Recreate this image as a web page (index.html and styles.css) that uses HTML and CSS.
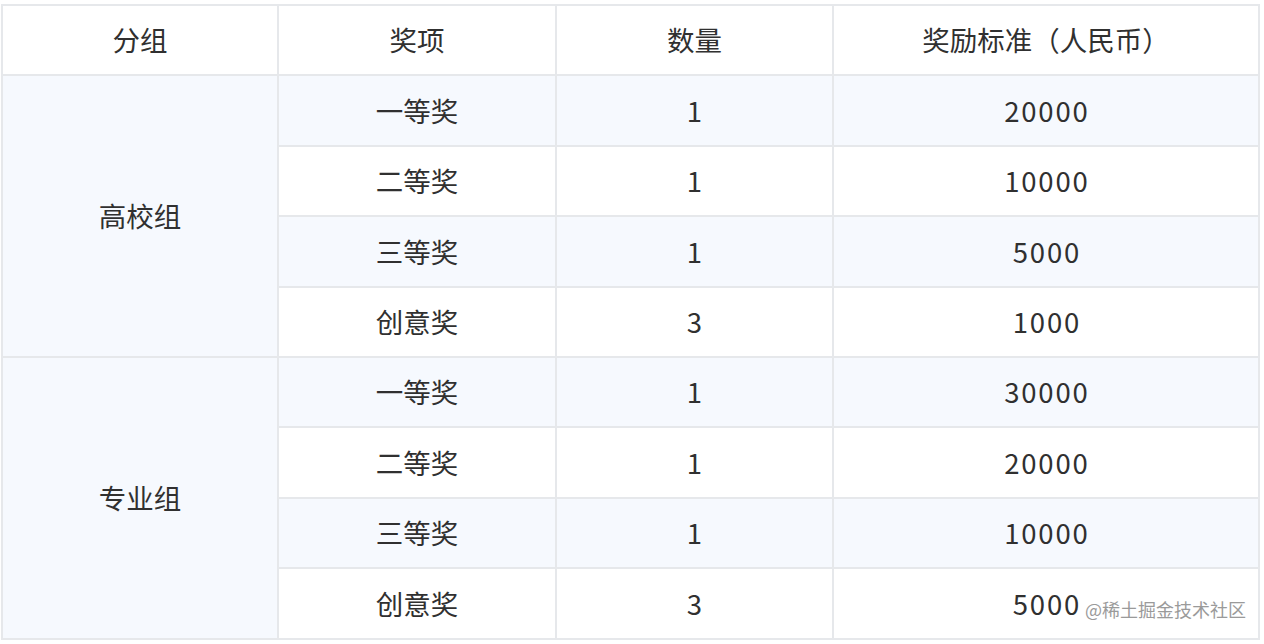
FILE: index.html
```html
<!DOCTYPE html>
<html lang="zh">
<head>
<meta charset="utf-8">
<link rel="stylesheet" href="styles.css">
</head>
<body>
<div class="wrap">
<table class="prize">
<colgroup><col class="c1"><col class="c2"><col class="c3"><col class="c4"></colgroup>
<thead>
<tr><th>分组</th><th>奖项</th><th>数量</th><th>奖励标准（人民币）</th></tr>
</thead>
<tbody>
<tr class="alt"><td rowspan="4">高校组</td><td>一等奖</td><td class="num">1</td><td class="num">20000</td></tr>
<tr><td>二等奖</td><td class="num">1</td><td class="num">10000</td></tr>
<tr class="alt"><td>三等奖</td><td class="num">1</td><td class="num">5000</td></tr>
<tr><td>创意奖</td><td class="num">3</td><td class="num">1000</td></tr>
<tr class="alt"><td rowspan="4">专业组</td><td>一等奖</td><td class="num">1</td><td class="num">30000</td></tr>
<tr><td>二等奖</td><td class="num">1</td><td class="num">20000</td></tr>
<tr class="alt"><td>三等奖</td><td class="num">1</td><td class="num">10000</td></tr>
<tr><td>创意奖</td><td class="num">3</td><td class="num">5000</td></tr>
</tbody>
</table>
<span class="mark">@稀土掘金技术社区</span>
</div>
</body>
</html>
```
FILE: styles.css
```css
html, body { margin: 0; padding: 0; background: #fff; }
body { font-family: "Noto Sans CJK SC", "Noto Sans", sans-serif; color: #303030; }
.wrap { position: relative; padding: 4px 6px 0 1px; }
.prize { border-collapse: collapse; width: 1257px; table-layout: fixed; font-size: 27.5px; }
.c1 { width: 276px; } .c2 { width: 278px; } .c3 { width: 277px; } .c4 { width: 426px; }
.prize th, .prize td { border: 2px solid #e6e8eb; text-align: center; vertical-align: middle; height: 68.4px; padding: 0; font-weight: normal; line-height: 1; }
.prize td.num { letter-spacing: 1.8px; text-indent: 1.8px; }
.prize tr.alt td, .prize td[rowspan] { background: #f6f9fe; }
.prize th { background: #fff; }
.mark { position: absolute; left: 1085px; top: 600px; font-size: 18px; color: #9a9a9a; line-height: 1; }
```
